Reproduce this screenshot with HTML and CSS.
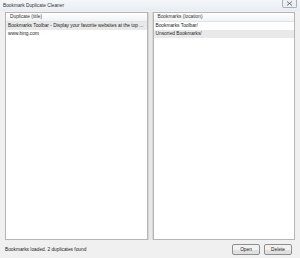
FILE: index.html
```html
<!DOCTYPE html>
<html>
<head>
<meta charset="utf-8">
<link rel="stylesheet" href="styles.css">
</head>
<body>
<div class="window">
  <div class="titlebar">
    <span class="title">Bookmark Duplicate Cleaner</span>
    <span class="close"><svg width="7" height="5" viewBox="0 0 7 5"><path d="M1 0.5 L6 4.5 M6 0.5 L1 4.5" stroke="#555" stroke-width="0.8"/></svg></span>
  </div>
  <div class="content">
    <div class="panel">
      <div class="header">Duplicate (title)</div>
      <div class="row sel">Bookmarks Toolbar - Display your favorite websites at the top ...</div>
      <div class="row">www.bing.com</div>
    </div>
    <div class="splitter"></div>
    <div class="panel">
      <div class="header">Bookmarks (location)</div>
      <div class="row">Bookmarks Toolbar/</div>
      <div class="row sel">Unsorted Bookmarks/</div>
    </div>
  </div>
  <div class="footer">
    <span class="status">Bookmarks loaded. 2 duplicates found</span>
    <div class="buttons">
      <button class="btn">Open</button>
      <button class="btn">Delete</button>
    </div>
  </div>
</div>
</body>
</html>
```
FILE: styles.css
```css
html, body {
  margin: 0;
  padding: 0;
}
body {
  width: 300px;
  height: 258px;
  overflow: hidden;
  background: #eef1f5;
  font-family: "Liberation Sans", Arial, sans-serif;
  font-size: 4.8px;
  color: #222;
}
.window {
  display: flex;
  flex-direction: column;
  height: 258px;
}
.titlebar {
  height: 11px;
  display: flex;
  align-items: flex-start;
  justify-content: space-between;
  padding: 0 3px 0 3px;
  background: linear-gradient(#f4f6f9, #e9edf2);
}
.title {
  color: #333;
  font-size: 4.8px;
  margin-top: 3px;
}
.close {
  width: 13px;
  height: 7px;
  border: 1px solid #a9b0b8;
  border-top: none;
  border-radius: 0 0 2px 2px;
  background: #eceff3;
  display: flex;
  align-items: center;
  justify-content: center;
}
.content {
  flex: 1;
  display: flex;
  padding: 1px 5px 0 5px;
  background: #f0f0f0;
}
.panel {
  flex: 1;
  background: #fff;
  border: 1px solid #b5b5b5;
  display: flex;
  flex-direction: column;
}
.splitter {
  width: 5px;
  background: #e8e8e8;
  border-left: 1px solid #d6d6d6;
  border-right: 1px solid #d6d6d6;
  box-sizing: border-box;
}
.header {
  height: 8px;
  line-height: 8px;
  padding-left: 4px;
  background: linear-gradient(#ffffff, #f1f2f4);
  border-bottom: 1px solid #e3e4e6;
  color: #333;
}
.row {
  height: 8px;
  line-height: 8px;
  padding-left: 2px;
  white-space: nowrap;
  overflow: hidden;
}
.row.sel {
  background: #e9e9e9;
}
.footer {
  height: 18px;
  display: flex;
  align-items: center;
  justify-content: space-between;
  padding: 0 8px 0 5px;
  background: #f0f0f0;
}
.status {
  color: #222;
}
.buttons {
  display: flex;
  gap: 4px;
}
.btn {
  width: 28px;
  height: 11px;
  padding: 0;
  font-family: inherit;
  font-size: 4.8px;
  color: #222;
  border: 1px solid #8f8f8f;
  border-radius: 2px;
  background: linear-gradient(#f2f2f2 50%, #e0e0e0 50%);
}
```
